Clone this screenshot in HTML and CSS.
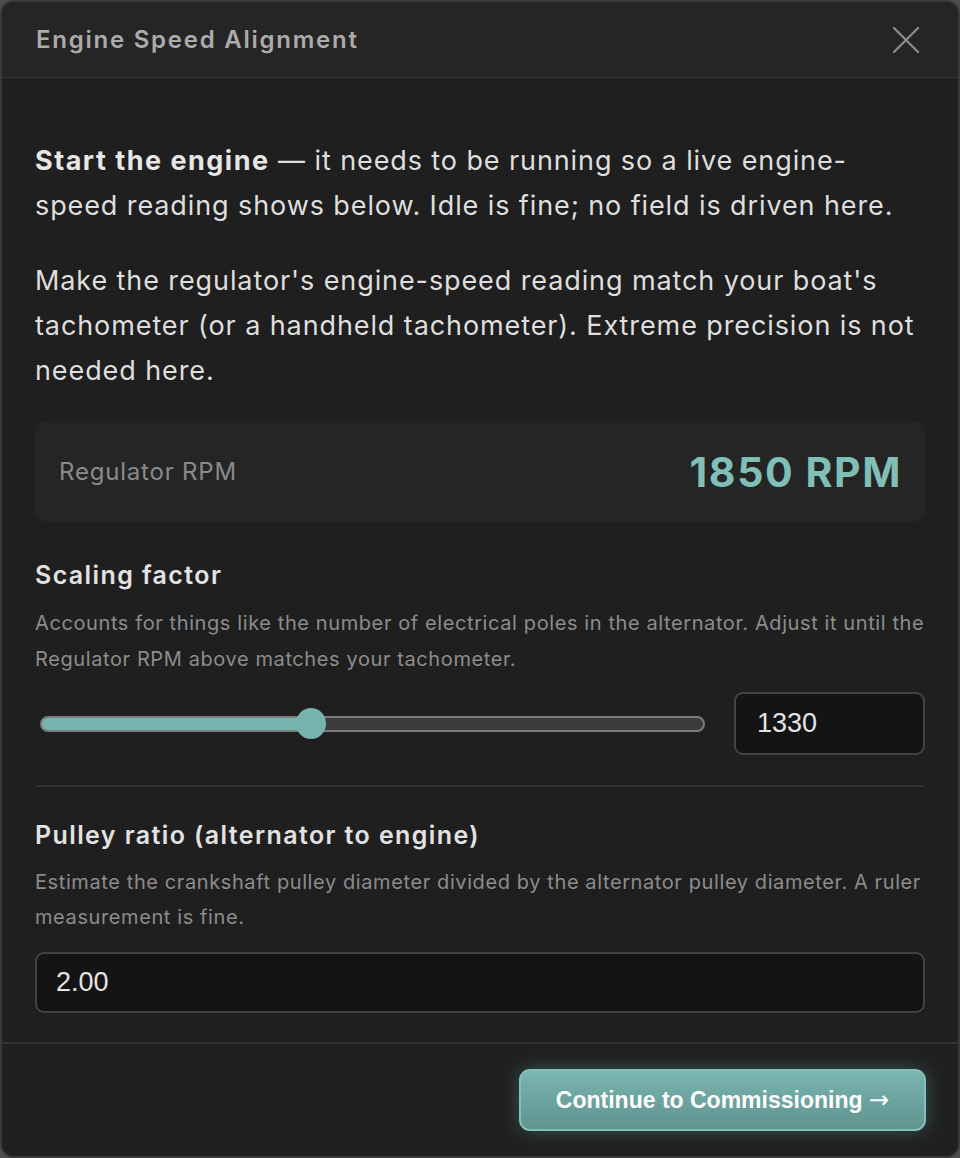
FILE: index.html
```html
<!DOCTYPE html>
<html lang="en">
<head>
    <meta charset="UTF-8">
    <meta name="viewport" content="width=device-width, initial-scale=1.0">
    <title>Engine Speed Alignment</title>
    <link rel="stylesheet" href="styles.css">
</head>
<body>
    <div class="modal">
        <div class="modalHeader">
            <h2 class="modalTitle">Engine Speed Alignment</h2>
            <button class="closeBtn" aria-label="Close">
                <svg width="28" height="28" viewBox="0 0 28 28">
                    <path d="M2 2 L26 26 M26 2 L2 26" stroke="#8a8a8a" stroke-width="2.4" stroke-linecap="round" fill="none"/>
                </svg>
            </button>
        </div>

        <div class="modalBody">
            <p class="lead"><strong>Start the engine</strong> — it needs to be running so a live engine-speed reading shows below. Idle is fine; no field is driven here.</p>
            <p class="lead">Make the regulator's engine-speed reading match your boat's tachometer (or a handheld tachometer). Extreme precision is not needed here.</p>

            <div class="rpmCard">
                <span class="rpmLabel">Regulator RPM</span>
                <span class="rpmValue">1850 RPM</span>
            </div>

            <div class="field">
                <h3 class="fieldTitle">Scaling factor</h3>
                <p class="fieldHelp">Accounts for things like the number of electrical poles in the alternator. Adjust it until the Regulator RPM above matches your tachometer.</p>
                <div class="sliderRow">
                    <input type="range" class="slider" min="0" max="3300" value="1330" style="--fill: 40.3%">
                    <input type="text" class="numBox small" value="1330">
                </div>
            </div>

            <hr class="divider">

            <div class="field">
                <h3 class="fieldTitle">Pulley ratio (alternator to engine)</h3>
                <p class="fieldHelp tight">Estimate the crankshaft pulley diameter divided by the alternator pulley diameter. A ruler measurement is fine.</p>
                <input type="text" class="numBox wide" value="2.00">
            </div>
        </div>

        <div class="modalFooter">
            <button class="continueBtn">Continue to Commissioning <span class="arrow">→</span></button>
        </div>
    </div>

    <script>
        let slider = document.querySelector(".slider");
        let box = document.querySelector(".numBox.small");
        slider.addEventListener("input", function(){
            box.value = slider.value;
            slider.style.setProperty("--fill", (slider.value / slider.max * 100) + "%");
        });
    </script>
</body>
</html>
```

FILE: styles.css
```css
*{
    box-sizing: border-box;
}
body{
    margin: 0;
    background: #4e4e4e;
    font-family: Inter, "Noto Sans", sans-serif;
}
.modal{
    height: 100vh;
    display: flex;
    flex-direction: column;
    background: #1f1f1f;
    border: 2px solid #3a3a3a;
    border-radius: 14px;
    overflow: hidden;
}

.modalHeader{
    height: 76px;
    flex-shrink: 0;
    display: flex;
    align-items: center;
    justify-content: space-between;
    padding: 0 38px 0 33px;
    background: #252525;
    border-bottom: 1px solid #363636;
}
.modalTitle{
    margin: 0 0 0 1px;
    font-size: 24px;
    font-weight: 600;
    color: #ababab;
    letter-spacing: 1.75px;
}
.closeBtn{
    border: none;
    background: none;
    padding: 0;
    display: flex;
    cursor: pointer;
}

.modalBody{
    flex: 1;
    padding: 60px 33px 0 33px;
}
.lead{
    margin: 0 0 30px 0;
    font-size: 27px;
    line-height: 45px;
    letter-spacing: 0.9px;
    color: #dedede;
}
.lead strong{
    font-weight: 700;
    letter-spacing: 1.5px;
    color: #e6e6e6;
}

.rpmCard{
    display: flex;
    align-items: center;
    justify-content: space-between;
    height: 101px;
    margin-top: -2px;
    padding: 0 24px;
    background: #252525;
    border-radius: 12px;
}
.rpmLabel{
    font-size: 24px;
    letter-spacing: 0.8px;
    color: #8a8a8a;
}
.rpmValue{
    font-size: 41px;
    font-weight: 700;
    letter-spacing: 1.6px;
    margin-right: -1px;
    color: #7fbfb6;
}

.field{
    margin-top: 36px;
}
.fieldTitle{
    margin: 0;
    font-size: 25px;
    line-height: 34px;
    font-weight: 600;
    letter-spacing: 1.4px;
    color: #e2e2e2;
}
.fieldHelp{
    margin: 13px 0 0 0;
    font-size: 20px;
    line-height: 36px;
    letter-spacing: 0.6px;
    color: #8c8c8c;
}
.fieldHelp.tight{
    line-height: 35px;
}

.sliderRow{
    display: flex;
    align-items: center;
    gap: 29px;
    margin-top: 15px;
}
.slider{
    -webkit-appearance: none;
    appearance: none;
    flex: 1;
    margin: 0 0 0 5px;
    height: 32px;
    background: none;
}
.slider::-webkit-slider-runnable-track{
    height: 16px;
    border: 2px solid #7c7c7c;
    border-radius: 8px;
    background: linear-gradient(to right, #77b4ae var(--fill), #3b3b3b var(--fill));
}
.slider::-webkit-slider-thumb{
    -webkit-appearance: none;
    width: 30px;
    height: 31px;
    margin-top: -9.5px;
    border-radius: 50%;
    background: #77b4ae;
    border: none;
}

.numBox{
    height: 63px;
    border: 2px solid #434343;
    border-radius: 9px;
    background: #141414;
    color: #e4e4e4;
    font-family: "Liberation Sans", Arial, sans-serif;
    font-size: 27px;
    padding: 0 21px;
}
.numBox.small{
    width: 191px;
}
.numBox.wide{
    display: block;
    width: 100%;
    height: 61px;
    margin-top: 17px;
    padding-left: 19px;
}

.divider{
    margin: 30px 0 0 0;
    border: none;
    border-top: 2px solid #2f2f2f;
}
.divider + .field{
    margin-top: 31px;
}

.modalFooter{
    flex-shrink: 0;
    display: flex;
    justify-content: flex-end;
    padding: 25px 32px 25px 33px;
    border-top: 2px solid #313131;
    background: #202020;
}
.continueBtn{
    height: 62px;
    padding: 0 35px;
    border: 2px solid #80c2bb;
    border-radius: 11px;
    background: linear-gradient(#7ab5b0, #5f938e);
    box-shadow: 0 0 18px rgba(110, 185, 175, 0.35);
    color: #ffffff;
    font-family: "Liberation Sans", Arial, sans-serif;
    font-size: 23px;
    font-weight: 700;
    cursor: pointer;
}
.arrow{
    font-family: "DejaVu Sans", sans-serif;
    font-weight: 400;
    font-size: 24px;
}
```
